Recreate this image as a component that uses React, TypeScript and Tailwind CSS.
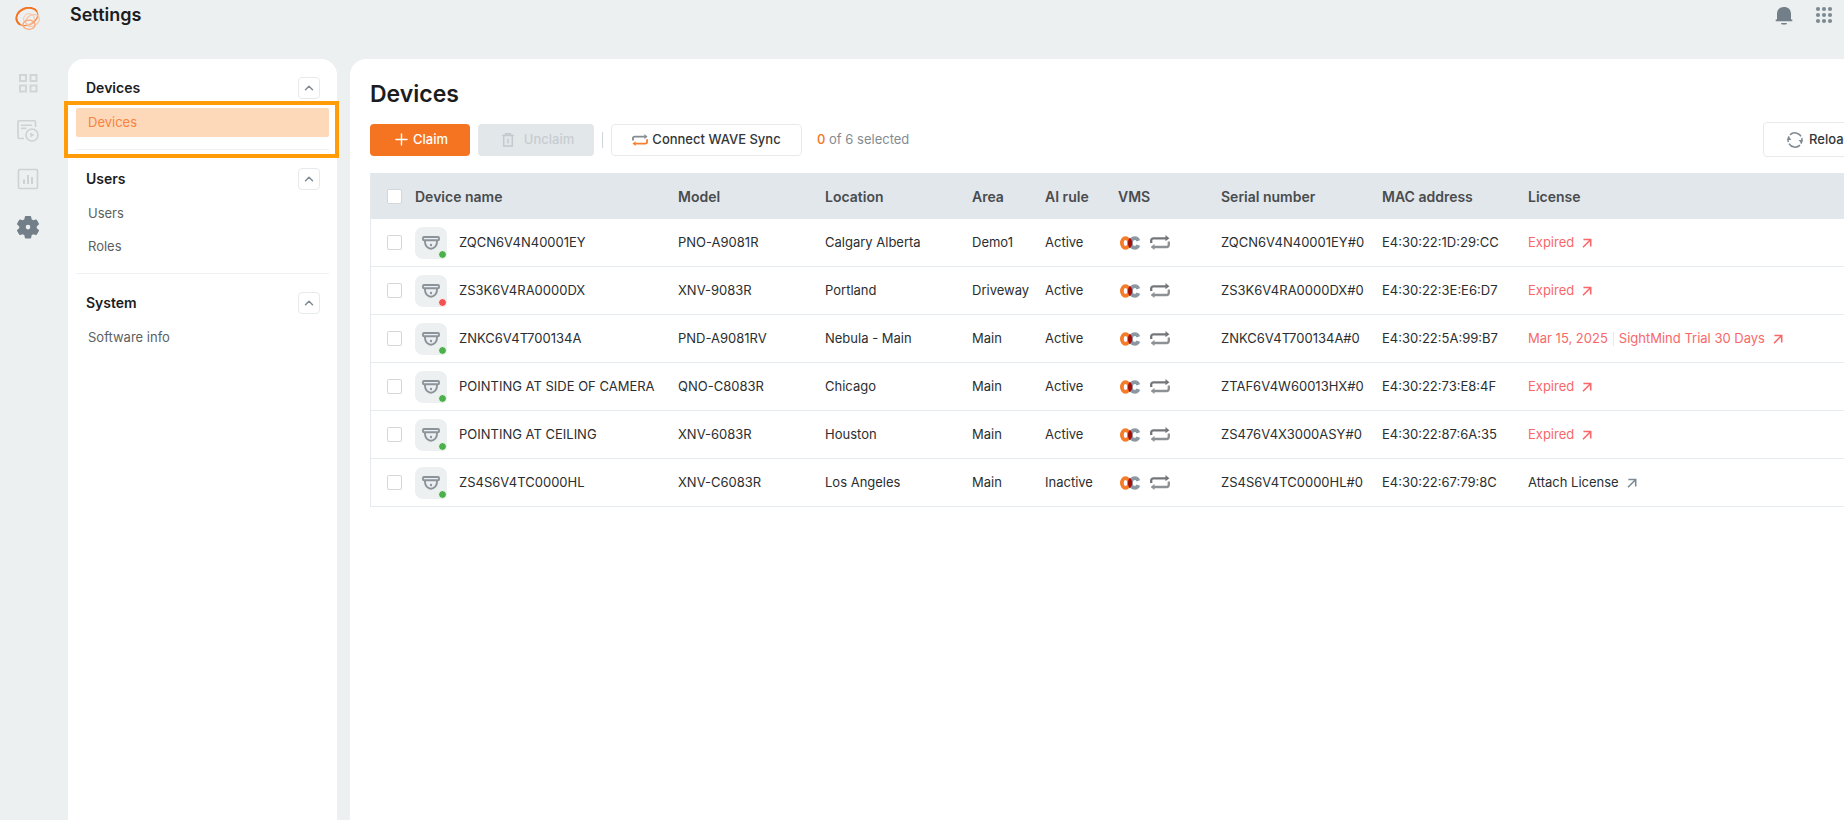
import { useState } from "react";
import { ChevronUp, Plus } from "lucide-react";

const devices = [
  { name: "ZQCN6V4N40001EY", model: "PNO-A9081R", location: "Calgary Alberta", area: "Demo1", rule: "Active", serial: "ZQCN6V4N40001EY#0", mac: "E4:30:22:1D:29:CC", license: "Expired", online: true },
  { name: "ZS3K6V4RA0000DX", model: "XNV-9083R", location: "Portland", area: "Driveway", rule: "Active", serial: "ZS3K6V4RA0000DX#0", mac: "E4:30:22:3E:E6:D7", license: "Expired", online: false },
  { name: "ZNKC6V4T700134A", model: "PND-A9081RV", location: "Nebula - Main", area: "Main", rule: "Active", serial: "ZNKC6V4T700134A#0", mac: "E4:30:22:5A:99:B7", license: "Mar 15, 2025", plan: "SightMind Trial 30 Days", online: true },
  { name: "POINTING AT SIDE OF CAMERA", model: "QNO-C8083R", location: "Chicago", area: "Main", rule: "Active", serial: "ZTAF6V4W60013HX#0", mac: "E4:30:22:73:E8:4F", license: "Expired", online: true },
  { name: "POINTING AT CEILING", model: "XNV-6083R", location: "Houston", area: "Main", rule: "Active", serial: "ZS476V4X3000ASY#0", mac: "E4:30:22:87:6A:35", license: "Expired", online: true },
  { name: "ZS4S6V4TC0000HL", model: "XNV-C6083R", location: "Los Angeles", area: "Main", rule: "Inactive", serial: "ZS4S6V4TC0000HL#0", mac: "E4:30:22:67:79:8C", license: "Attach License", online: true },
];

const Logo = () => (
  <svg width="26" height="24" viewBox="0 0 26 24" fill="none">
    <ellipse cx="12" cy="9.8" rx="11.2" ry="8.2" transform="rotate(-24 12 9.8)" stroke="#f58a4b" strokeWidth="1.3" />
    <path d="M4.500 17.200C-.500 13 .8 5.600 7.500 2.200C12.500-.3 19 .4 21.400 3.800" stroke="#f37321" strokeWidth="1.800" strokeLinecap="round" />
    <circle cx="14" cy="12" r="5.400" stroke="#fac4a4" strokeWidth="1" />
    <ellipse cx="17.500" cy="13.500" rx="7.300" ry="5.400" transform="rotate(-30 17.500 13.500)" stroke="#fac4a4" strokeWidth="1.200" />
    <ellipse cx="14" cy="17.800" rx="6" ry="4.600" stroke="#f8a878" strokeWidth="1.300" />
  </svg>
);

const DashboardIcon = () => (
  <svg width="20" height="20" viewBox="0 0 20 20" fill="none" stroke="#d0d5d6" strokeWidth="2">
    <rect x="2" y="2" width="6" height="6" />
    <rect x="12.500" y="2" width="6" height="6" />
    <rect x="2" y="12.500" width="6" height="6" />
    <rect x="12.500" y="12.500" width="6" height="6" />
  </svg>
);

const PlaybackIcon = () => (
  <svg width="22" height="22" viewBox="0 0 22 22" fill="none" stroke="#cdd2d3" strokeWidth="1.600">
    <path d="M7 18.500H2a1 1 0 0 1-1-1V1.800a1 1 0 0 1 1-1h15.500a1 1 0 0 1 1 1V7" />
    <path d="M4 5.200h11M4 8.400h5.500" />
    <circle cx="15" cy="15" r="6" />
    <path d="M13.300 12.600v4.800l4-2.400z" fill="#cdd2d3" stroke="none" />
  </svg>
);

const StatsIcon = () => (
  <svg width="22" height="22" viewBox="0 0 22 22" fill="none" stroke="#cdd2d3">
    <rect x="1.500" y="1.500" width="19" height="19" rx="1" strokeWidth="1.600" />
    <path d="M7 16v-4.500M11 16V7M15 16V9" strokeWidth="2" />
  </svg>
);

const GearIcon = () => (
  <svg width="24" height="24" viewBox="0 0 24 24">
    <path
      fillRule="evenodd"
      fill="#737f88"
      d="M8.800 1.800 9.500 1h5l.7.8.4 2.400 1.700 1 2.400-.8 1 .3 2.300 4.100-.3 1-1.900 1.500v1.900l1.900 1.500.3 1-2.300 4.100-1 .3-2.400-.8-1.700 1-.4 2.400-.7.800h-5l-.7-.8-.4-2.400-1.700-1-2.400.8-1-.3L1 15.700l.3-1 1.900-1.500v-1.900L1.300 9.800l-.3-1 2.300-4.100 1-.3 2.400.8 1.700-1zM12 9.800a2.300 2.300 0 1 0 0 4.600 2.300 2.300 0 0 0 0-4.600z"
    />
  </svg>
);

const BellIcon = () => (
  <svg width="18" height="19" viewBox="0 0 18 19" fill="#737f88">
    <path d="M9 1c4.200 0 7 2.600 7 6.800v5.600h1.300v1.900H.7v-1.900H2V7.800C2 3.600 4.800 1 9 1zM6 17h6l-.8 1.600H6.800z" />
  </svg>
);

const AppsIcon = () => (
  <svg width="18" height="18" viewBox="0 0 18 18" fill="#7e8a93">
    {[3, 9, 15].map((y) => [3, 9, 15].map((x) => <circle key={`${x}-${y}`} cx={x} cy={y} r="2.100" />))}
  </svg>
);

const TrashIcon = () => (
  <svg width="12" height="14" viewBox="0 0 12 14" fill="none" stroke="#c3c9cd" strokeWidth="1.500">
    <path d="M0 2.600h12M3.500 2.300V.8h5v1.500M1.700 2.600V13h8.600V2.600M6 5.800v4.400" />
  </svg>
);

// top half and bottom half can be tinted separately
const LoopIcon = ({ top, bottom, className }: { top: string; bottom: string; className: string }) => (
  <svg className={className} viewBox="0 0 20 15" fill="none" strokeWidth="2.300">
    <path d="M1.200 8V5.500a2.200 2.200 0 0 1 2.200-2.200H16" stroke={top} />
    <path d="M15.500 0 19.400 3.300l-3.900 3z" fill={top} />
    <path d="M18.800 6.500V9.800a2.200 2.200 0 0 1-2.200 2.200H4" stroke={bottom} />
    <path d="M4.500 9 .6 12l3.900 3z" fill={bottom} />
  </svg>
);

const ReloadIcon = () => (
  <svg width="16" height="16" viewBox="0 0 16 16" fill="none" stroke="#7e8a93" strokeWidth="1.500">
    <path d="M3 2.900A7 7 0 0 1 14 4.400M13 13.100A7 7 0 0 1 2 11.600" />
    <path d="M14.700 6a7 7 0 0 1-.8 5.600M1.300 10a7 7 0 0 1 .8-5.600" />
    <path d="M11.600 8h4.200l-1.400 3.400zM.2 8h4.200L1.600 4.600z" fill="#7e8a93" stroke="none" />
  </svg>
);

const CameraIcon = () => (
  <svg width="18" height="14" viewBox="0 0 18 14" fill="none" stroke="#8b949c" strokeWidth="1.900">
    <rect x="1" y="1" width="16" height="3.200" rx="1" />
    <path d="M3 4.400v1.600a6 6.700 0 0 0 12 0V4.400" />
    <circle cx="9" cy="9" r="1.200" fill="#8b949c" stroke="none" />
  </svg>
);

const VmsIcon = () => (
  <svg width="20" height="14" viewBox="0 0 20 14" fill="none" strokeWidth="3.800">
    <path d="M18.300 4.800C17.600 2.900 16.500 2.100 14.900 2.100c-2.600 0-4 1.900-4 4.900s1.400 4.900 4 4.900c1.600 0 2.800-.8 3.500-2.700" stroke="#8b98a3" />
    <ellipse cx="5.500" cy="7" rx="3.600" ry="4.900" stroke="#f47b2a" />
    <path d="M9.800 1.800c3.300 2.800 3.300 7.600 0 10.400-2.500-2.800-2.500-7.600 0-10.400z" fill="#a50f0a" />
  </svg>
);

const ArrowIcon = () => (
  <svg width="10" height="10" viewBox="0 0 10 10" fill="none" stroke="currentColor" strokeWidth="1.600">
    <path d="M1.400 1.500h7.300v7M8.500 1.700 1 9.200" />
  </svg>
);

const Checkbox = ({ label }: { label: string }) => (
  <input
    type="checkbox"
    aria-label={label}
    className="block w-[15px] h-[15px] ml-4 appearance-none rounded-xs border border-[#d3d7d9] bg-white checked:bg-[#f37321]"
  />
);

const NavSection = ({ title, items, active }: { title: string; items: string[]; active?: string }) => {
  const [open, setOpen] = useState(true);

  return (
    <section>
      <div className="flex items-center justify-between h-[22px] pl-[10px] pr-[9px]">
        <h2 className="text-[14px] leading-5 font-semibold text-[#1c1c1e]">{title}</h2>
        <button
          aria-label={`Toggle ${title}`}
          onClick={() => setOpen(!open)}
          className="flex items-center justify-center w-[22px] h-[22px] rounded border border-[#e6eaec] text-[#7e8a93]"
        >
          <ChevronUp size={14} strokeWidth={2.5} />
        </button>
      </div>
      {open && (
        <ul className="relative mt-[9px] space-y-1">
          {items.map((item) => (
            <li key={item}>
              <a
                href="#"
                className={
                  item === active
                    ? "flex items-center h-[29px] px-3 rounded-xs bg-[#fdd9ba] text-[13px] text-[#f7833f]"
                    : "flex items-center h-[29px] px-3 text-[13px] text-[#5c5f61]"
                }
              >
                {item}
              </a>
            </li>
          ))}
          {active && (
            <li aria-hidden="true" className="absolute -top-[7px] -bottom-[21px] -left-3 -right-[10px] border-4 border-[#ff9c07] pointer-events-none" />
          )}
        </ul>
      )}
    </section>
  );
};

const Toolbar = () => (
  <div className="flex items-center h-[35px] mt-3">
    <button className="flex items-center justify-center gap-[2px] w-[100px] h-8 rounded bg-[#f57421] text-[13px] font-medium text-white">
      <Plus size={19} strokeWidth={1.8} />
      Claim
    </button>
    <button disabled className="flex items-center justify-center gap-[10px] w-[116px] h-8 ml-2 pl-1 rounded bg-[#e2e7ea] text-[13px] font-medium text-[#c8cdd1]">
      <TrashIcon />
      Unclaim
    </button>
    <div className="w-px h-4 mx-2 bg-[#cfd4d7]" />
    <button className="flex items-center justify-center gap-1 w-[191px] h-8 rounded border border-[#e6eaec] text-[13px] font-medium text-[#333638]">
      <LoopIcon top="#858b90" bottom="#f5802f" className="w-4 h-3" />
      Connect WAVE Sync
    </button>
    <p className="ml-[15px] text-[13px] text-[#848b91]">
      <span className="font-medium text-[#f57421]">0</span> of 6 selected
    </p>
    <button className="flex items-center gap-[6px] w-[107px] h-[35px] ml-auto pl-[23px] rounded border border-[#e6eaec] text-[13px] font-medium text-[#333638]">
      <ReloadIcon />
      Reload
    </button>
  </div>
);

const DeviceTable = () => (
  <table className="w-full mt-4 table-fixed border-separate border-spacing-0 border-l border-[#e6eaee] text-left text-[13px] text-[#2b2e30]">
    <colgroup>
      <col className="w-[44px]" />
      <col className="w-[263px]" />
      <col className="w-[147px]" />
      <col className="w-[147px]" />
      <col className="w-[73px]" />
      <col className="w-[73px]" />
      <col className="w-[103px]" />
      <col className="w-[161px]" />
      <col className="w-[146px]" />
      <col />
    </colgroup>
    <thead>
      <tr className="h-[46px] bg-[#e2e7eb] text-[14px] text-[#494c4e]">
        <th><Checkbox label="Select all devices" /></th>
        {["Device name", "Model", "Location", "Area", "AI rule", "VMS", "Serial number", "MAC address", "License"].map((title) => (
          <th key={title} className="font-semibold whitespace-nowrap">{title}</th>
        ))}
      </tr>
    </thead>
    <tbody>
      {devices.map((item) => (
        <tr key={item.serial} className="h-12 whitespace-nowrap *:border-b *:border-[#e6ecf0]">
          <td><Checkbox label={`Select ${item.name}`} /></td>
          <td>
            <div className="flex items-center gap-3">
              <span className="relative flex items-center justify-center w-8 h-8 rounded-lg bg-[#ecf0f1]">
                <CameraIcon />
                <i className={`absolute right-0 bottom-0 w-[9px] h-[9px] rounded-full border border-white ${item.online ? "bg-[#4fae4e]" : "bg-[#f0524f]"}`} />
              </span>
              {item.name}
            </div>
          </td>
          <td>{item.model}</td>
          <td>{item.location}</td>
          <td>{item.area}</td>
          <td>{item.rule}</td>
          <td>
            <div className="flex items-center gap-[10px] pl-[2px]">
              <VmsIcon />
              <LoopIcon top="#74777a" bottom="#8e9194" className="w-5 h-[15px]" />
            </div>
          </td>
          <td>{item.serial}</td>
          <td>{item.mac}</td>
          <td>
            <a href="#" className={`flex items-center ${item.license === "Attach License" ? "" : "text-[#f8686a]"}`}>
              <span>{item.license}</span>
              {item.plan && (
                <>
                  <span className="w-px h-[14px] mx-[5px] bg-[#e6eaec]" />
                  <span>{item.plan}</span>
                </>
              )}
              <span className={`ml-2 ${item.license === "Attach License" ? "text-[#7e8a93]" : ""}`}>
                <ArrowIcon />
              </span>
            </a>
          </td>
        </tr>
      ))}
    </tbody>
  </table>
);

const App = () => {
  return (
    <div className="flex flex-col h-screen overflow-hidden bg-[#ecf0f1] font-[Inter,sans-serif]">
      <header className="flex items-start h-[59px] shrink-0 pl-[15px] pr-[11px]">
        <a href="#" aria-label="Home" className="mt-[7px]"><Logo /></a>
        <h1 className="ml-[29px] mt-[3px] text-[18px] leading-6 font-semibold text-[#1c1c1e]">Settings</h1>
        <button aria-label="Notifications" className="ml-auto mt-[6px]"><BellIcon /></button>
        <button aria-label="Apps" className="ml-[22px] mt-[6px]"><AppsIcon /></button>
      </header>

      <div className="flex flex-1 min-h-0">
        <nav className="flex flex-col items-center w-[68px] shrink-0 pr-3">
          <a href="#" aria-label="Dashboard" className="flex items-center justify-center h-12"><DashboardIcon /></a>
          <a href="#" aria-label="Playback" className="flex items-center justify-center h-12"><PlaybackIcon /></a>
          <a href="#" aria-label="Statistics" className="flex items-center justify-center h-12"><StatsIcon /></a>
          <a href="#" aria-label="Settings" className="flex items-center justify-center h-12"><GearIcon /></a>
        </nav>

        <aside className="w-[269px] shrink-0 px-2 pt-[18px] rounded-t-2xl bg-white">
          <NavSection title="Devices" items={["Devices"]} active="Devices" />
          <hr className="mt-3 mb-[18px] border-[#eef1f3]" />
          <NavSection title="Users" items={["Users", "Roles"]} />
          <hr className="mt-3 mb-[18px] border-[#eef1f3]" />
          <NavSection title="System" items={["Software info"]} />
        </aside>

        <main className="flex-1 min-w-0 ml-[13px] pl-5 pt-[19px] overflow-hidden rounded-tl-2xl bg-white">
          {/* content is wider than the window and runs off to the right */}
          <div className="min-w-[1500px]">
            <h2 className="text-[23px] leading-8 font-semibold text-[#1c1c1e]">Devices</h2>
            <Toolbar />
            <DeviceTable />
          </div>
        </main>
      </div>
    </div>
  );
};

export default App;
